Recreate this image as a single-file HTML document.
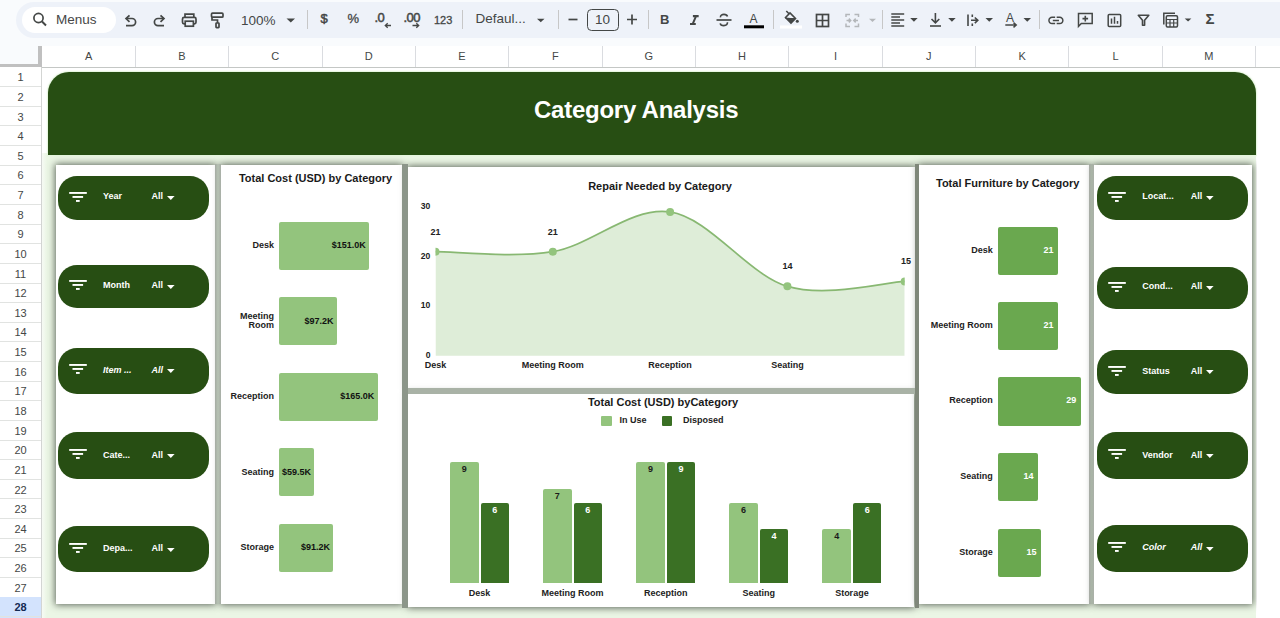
<!DOCTYPE html>
<html><head><meta charset="utf-8">
<style>
*{box-sizing:border-box;margin:0;padding:0}
html,body{width:1280px;height:618px;overflow:hidden;background:#f9fbfd;font-family:"Liberation Sans",sans-serif;position:relative}
.a{position:absolute}
#tb{left:16px;top:2px;width:1300px;height:36px;border-radius:18px;background:#eef2f9}
#search{left:22px;top:7px;width:94px;height:26px;border-radius:13px;background:#fff}
.tt{position:absolute;color:#444746;font-size:13px;line-height:16px;white-space:nowrap}
.sep{position:absolute;top:10px;width:1px;height:19px;background:#c7c7c7}
#colh{left:0;top:46px;width:1280px;height:22px;background:#fff;border-bottom:1px solid #c4c7c5}
.cl{position:absolute;top:0;height:21px;line-height:21px;font-size:11px;color:#444746;text-align:center}
.cs{position:absolute;top:0;width:1px;height:21px;background:#dadce0}
#corner{left:0;top:46px;width:42px;height:22px;background:#f9fbfd;border-right:4px solid #c0c0c0;border-bottom:4px solid #c0c0c0}
#rowh{left:0;top:67px;width:42px;height:551px;background:#fff;border-right:1px solid #d3d5d3}
.rl{position:absolute;left:0;width:41px;text-align:center;font-size:11px;color:#444746}
.rs{position:absolute;left:0;width:41px;height:1px;background:#e1e3e1}
#grid{left:42px;top:68px;width:1238px;height:550px;background:#fff}
#dash{left:42px;top:153px;width:1214px;height:465px;background:linear-gradient(90deg,#f6faf4 0,#ebf6e5 5px)}
#hdr{left:47.5px;top:71.5px;width:1208.5px;height:83.5px;background:#274e13;border-radius:21px 21px 0 0;box-shadow:0 0 1.5px 1px #e3f5dc}
#hdr span{position:absolute;left:486.5px;width:203px;top:23px;text-align:center;color:#fff;font-weight:bold;font-size:24px;line-height:30px;letter-spacing:-.25px;white-space:nowrap}
.card{position:absolute;background:#fff;box-shadow:0 0 7px 1px rgba(70,80,68,.85)}
.pill{position:absolute;background:#274e13;border-radius:19px;color:#fff;font-weight:bold;font-size:9.5px}
.pt{position:absolute;color:#fff;font-weight:bold;font-size:9px;line-height:12px;white-space:nowrap}
.ct{position:absolute;color:#1a1a1a;font-weight:bold;font-size:11px;line-height:13px;white-space:nowrap}
.lb{position:absolute;color:#222;font-weight:bold;font-size:9px;line-height:11px;white-space:nowrap}
.bar{position:absolute;border-radius:2px}
</style></head><body>
<div id="tb" class="a"></div>
<div id="search" class="a"></div>
<svg class="a" style="left:0;top:0" width="1280" height="40" viewBox="0 0 1280 40" fill="none" stroke="#444746" stroke-width="1.7">
<!-- search -->
<circle cx="38.5" cy="18" r="4.6"/><path d="M42 21.5 L46 25.5" stroke-width="1.9"/>
<!-- undo -->
<path d="M127 18.5 H132 a3.6 3.6 0 0 1 0 7.2 H126"/><path d="M129.5 15.3 L126 18.6 L129.5 21.9"/>
<!-- redo -->
<path d="M163.5 18.5 H158 a3.6 3.6 0 0 0 0 7.2 H164"/><path d="M160.5 15.3 L164 18.6 L160.5 21.9"/>
<!-- print -->
<path d="M185 17.3 V14.2 H193.8 V17.3"/><rect x="182.5" y="17.3" width="13.5" height="6.5" rx="1.6"/><rect x="185.2" y="21.2" width="8.2" height="5" fill="#eef2f9"/>
<!-- paint format -->
<rect x="211.5" y="13.2" width="11.5" height="4" rx="1"/><path d="M212 17.2 V20 H217.5 V23"/><rect x="216" y="23" width="3" height="4.6" rx=".6"/>
<!-- zoom arrow -->
<path d="M286.5 18.5 H295 L290.75 22.5Z" fill="#444746" stroke="none"/>
<!-- decrease decimal arrow -->
<path d="M391 25.5 H385.5 M387.7 23.3 L385.3 25.5 L387.7 27.7" stroke-width="1.3"/>
<path d="M412.5 25.5 H418.5 M416.3 23.3 L418.7 25.5 L416.3 27.7" stroke-width="1.3"/>
<!-- font arrow -->
<path d="M537 18.8 H544.5 L540.75 22.3Z" fill="#444746" stroke="none"/>
<!-- minus plus -->
<path d="M568.5 19.5 H577.5"/><path d="M627 19.5 H637 M632 14.5 V24.5"/>
<rect x="587.5" y="9.5" width="31" height="21" rx="4" stroke-width="1"/>
<path transform="translate(685.7 12.1) scale(0.72)" fill="#444746" stroke="none" d="M10 4v3h2.21l-3.42 8H6v3h8v-3h-2.21l3.42-8H18V4z"/>
<!-- strikethrough -->
<path d="M716.5 20 H731.5"/><path d="M727.5 16.5 C727 14.8 725.5 14.4 724 14.4 C722 14.4 720.2 15.3 720.5 17.3" stroke-width="1.6"/><path d="M727.5 22.3 C727.5 24.8 725.6 25.6 723.8 25.6 C721.8 25.6 720.4 24.8 720.2 23.3" stroke-width="1.6"/>
<!-- text color underline -->
<rect x="744" y="25.3" width="20" height="3" fill="#000" stroke="none"/>
<!-- paint bucket -->
<path d="M786.3 11 L789 13.7 M785.5 17.5 L790 13 L795.5 18.5 L791 23 Z" stroke-width="1.6"/><path d="M785.5 18.5 H795" stroke-width="1"/><path d="M785.5 17.5 L791 23 L795.5 18.5 Z" fill="#444746" stroke="none"/><circle cx="797.3" cy="21.3" r="1.5" fill="#444746" stroke="none"/>
<rect x="780" y="25.5" width="22" height="3" fill="#fff" stroke="none"/>
<!-- borders -->
<rect x="816.5" y="14.5" width="12" height="12"/><path d="M822.5 14.5 V26.5 M816.5 20.5 H828.5"/>
<!-- merge (disabled) -->
<g stroke="#b4b7ba" stroke-width="1.5"><path d="M846 17 V14.5 H850 M854.5 14.5 H858.5 V17 M846 23.5 V26.5 H850 M854.5 26.5 H858.5 V23.5"/><path d="M846.5 20.5 H850.5 M848.8 18.6 L850.7 20.5 L848.8 22.4 M858 20.5 H854 M855.7 18.6 L853.8 20.5 L855.7 22.4"/></g>
<path d="M869 18.8 H876 L872.5 22Z" fill="#b4b7ba" stroke="none"/>
<!-- align left -->
<path d="M891.3 14 H904.2 M891.3 17 H900 M891.3 20 H904.2 M891.3 23 H900 M891.3 26 H904.2" stroke-width="1.4"/>
<path d="M910.2 18 H917.7 L913.95 21.8Z" fill="#444746" stroke="none"/>
<!-- valign bottom -->
<path d="M935.4 13 V22.5 M931.5 19 L935.4 22.8 L939.3 19" stroke-width="1.6"/><path d="M930 26 H941" stroke-width="1.6"/>
<path d="M948.2 18 H955.7 L951.95 21.8Z" fill="#444746" stroke="none"/>
<!-- wrap -->
<path d="M968 14.5 V26 M972.3 14.5 V17 M972.3 23.5 V26 M971 20.3 H977.5 M974.8 17.5 L977.8 20.3 L974.8 23.1" stroke-width="1.6"/>
<path d="M985.5 18 H993 L989.25 21.8Z" fill="#444746" stroke="none"/>
<!-- rotate -->
<path d="M1005.3 25 H1016 M1013.5 22.6 L1016.2 25 L1013.5 27.4" stroke-width="1.5"/>
<path d="M1023.5 18 H1031 L1027.25 21.8Z" fill="#444746" stroke="none"/>
<!-- link -->
<path transform="translate(1046.66 11.21) scale(0.77)" fill="#444746" stroke="none" d="M3.9 12c0-1.71 1.39-3.1 3.1-3.1h4V7H7c-2.76 0-5 2.240-5 5s2.24 5 5 5h4v-1.9H7c-1.71 0-3.1-1.39-3.1-3.1zM8 13h8v-2H8v2zm9-6h-4v1.9h4c1.71 0 3.1 1.39 3.1 3.1s-1.390 3.1-3.1 3.1h-4V17h4c2.76 0 5-2.24 5-5s-2.24-5-5-5z"/>
<!-- comment -->
<path d="M1078.5 26.5 V13.6 H1092.2 V23.6 H1081.3 Z" stroke-width="1.5"/><path d="M1085.3 15.8 V21.4 M1082.5 18.6 H1088.1" stroke-width="1.6"/>
<!-- chart -->
<rect x="1108.2" y="14.4" width="12.5" height="12" rx="1" stroke-width="1.5"/><path d="M1111.5 18.5 V23.8 M1114.5 16.8 V23.8 M1117.5 21 V23.8" stroke-width="1.5"/>
<!-- filter -->
<path d="M1138.3 15.3 H1148.8 L1144.6 20.3 V25.3 H1142.5 V20.3 Z" stroke-width="1.6" stroke-linejoin="round"/>
<!-- table/functions -->
<path d="M1163.8 24.5 V13.2 H1175" stroke-width="1.5"/><rect x="1166.3" y="15.7" width="11.2" height="11.2" rx="1.2" stroke-width="1.5"/><path d="M1166.3 19.5 H1177.5 M1166.3 23 H1177.5 M1170 19.5 V26.9 M1173.7 19.5 V26.9" stroke-width="1.2"/>
<path d="M1184.7 18.5 H1191.4 L1188.05 21.5Z" fill="#444746" stroke="none"/>
</svg>
<div class="tt" style="left:56px;top:12px;font-size:13.5px;color:#474747">Menus</div>
<div class="tt" style="left:241px;top:12.5px;font-size:13.5px">100%</div>
<div class="sep" style="left:307px"></div>
<div class="tt" style="left:320.5px;top:11px;font-size:13px;-webkit-text-stroke:.5px #444746">$</div>
<div class="tt" style="left:347.5px;top:11px;font-size:13px;-webkit-text-stroke:.3px #444746">%</div>
<div class="tt" style="left:374.5px;top:10px;font-size:13px;-webkit-text-stroke:.5px #444746;letter-spacing:-.5px">.0</div>
<div class="tt" style="left:403.5px;top:10px;font-size:13px;-webkit-text-stroke:.5px #444746;letter-spacing:-.5px">.00</div>
<div class="tt" style="left:434px;top:12px;font-size:11px;-webkit-text-stroke:.3px #444746">123</div>
<div class="sep" style="left:461.5px"></div>
<div class="tt" style="left:475.5px;top:11px;font-size:13.5px">Defaul...</div>
<div class="sep" style="left:558px"></div>
<div class="tt" style="left:595px;top:12px;font-size:13.5px">10</div>
<div class="sep" style="left:647.5px"></div>
<div class="tt" style="left:660px;top:12px;font-size:13px;font-weight:bold">B</div>
<div class="tt" style="left:749.5px;top:11px;font-size:12px">A</div>
<div class="sep" style="left:773px"></div>
<div class="sep" style="left:881.7px"></div>
<div class="tt" style="left:1006px;top:10px;font-size:12px">A</div>
<div class="sep" style="left:1038.5px"></div>
<div class="tt" style="left:1205.5px;top:11px;font-size:15px;font-weight:bold">&Sigma;</div>
<div id="colh" class="a"><div class="cl" style="left:42.0px;width:93.3px">A</div><div class="cs" style="left:134.8px"></div><div class="cl" style="left:135.3px;width:93.3px">B</div><div class="cs" style="left:228.2px"></div><div class="cl" style="left:228.7px;width:93.3px">C</div><div class="cs" style="left:321.5px"></div><div class="cl" style="left:322.0px;width:93.3px">D</div><div class="cs" style="left:414.9px"></div><div class="cl" style="left:415.4px;width:93.3px">E</div><div class="cs" style="left:508.2px"></div><div class="cl" style="left:508.7px;width:93.3px">F</div><div class="cs" style="left:601.6px"></div><div class="cl" style="left:602.1px;width:93.3px">G</div><div class="cs" style="left:694.9px"></div><div class="cl" style="left:695.4px;width:93.3px">H</div><div class="cs" style="left:788.3px"></div><div class="cl" style="left:788.8px;width:93.3px">I</div><div class="cs" style="left:881.6px"></div><div class="cl" style="left:882.1px;width:93.3px">J</div><div class="cs" style="left:975.0px"></div><div class="cl" style="left:975.5px;width:93.3px">K</div><div class="cs" style="left:1068.3px"></div><div class="cl" style="left:1068.8px;width:93.3px">L</div><div class="cs" style="left:1161.7px"></div><div class="cl" style="left:1162.2px;width:93.3px">M</div><div class="cs" style="left:1255.0px"></div></div>
<div id="corner" class="a"></div>
<div id="rowh" class="a"><div class="rl" style="top:1.2px;height:19.6px;line-height:19.6px">1</div><div class="rs" style="top:19.1px"></div><div class="rl" style="top:20.8px;height:19.6px;line-height:19.6px">2</div><div class="rs" style="top:38.8px"></div><div class="rl" style="top:40.5px;height:19.6px;line-height:19.6px">3</div><div class="rs" style="top:58.4px"></div><div class="rl" style="top:60.1px;height:19.6px;line-height:19.6px">4</div><div class="rs" style="top:78.0px"></div><div class="rl" style="top:79.7px;height:19.6px;line-height:19.6px">5</div><div class="rs" style="top:97.7px"></div><div class="rl" style="top:99.4px;height:19.6px;line-height:19.6px">6</div><div class="rs" style="top:117.3px"></div><div class="rl" style="top:119.0px;height:19.6px;line-height:19.6px">7</div><div class="rs" style="top:136.9px"></div><div class="rl" style="top:138.6px;height:19.6px;line-height:19.6px">8</div><div class="rs" style="top:156.6px"></div><div class="rl" style="top:158.3px;height:19.6px;line-height:19.6px">9</div><div class="rs" style="top:176.2px"></div><div class="rl" style="top:177.9px;height:19.6px;line-height:19.6px">10</div><div class="rs" style="top:195.8px"></div><div class="rl" style="top:197.5px;height:19.6px;line-height:19.6px">11</div><div class="rs" style="top:215.5px"></div><div class="rl" style="top:217.2px;height:19.6px;line-height:19.6px">12</div><div class="rs" style="top:235.1px"></div><div class="rl" style="top:236.8px;height:19.6px;line-height:19.6px">13</div><div class="rs" style="top:254.7px"></div><div class="rl" style="top:256.4px;height:19.6px;line-height:19.6px">14</div><div class="rs" style="top:274.4px"></div><div class="rl" style="top:276.1px;height:19.6px;line-height:19.6px">15</div><div class="rs" style="top:294.0px"></div><div class="rl" style="top:295.7px;height:19.6px;line-height:19.6px">16</div><div class="rs" style="top:313.6px"></div><div class="rl" style="top:315.3px;height:19.6px;line-height:19.6px">17</div><div class="rs" style="top:333.2px"></div><div class="rl" style="top:334.9px;height:19.6px;line-height:19.6px">18</div><div class="rs" style="top:352.9px"></div><div class="rl" style="top:354.6px;height:19.6px;line-height:19.6px">19</div><div class="rs" style="top:372.5px"></div><div class="rl" style="top:374.2px;height:19.6px;line-height:19.6px">20</div><div class="rs" style="top:392.1px"></div><div class="rl" style="top:393.8px;height:19.6px;line-height:19.6px">21</div><div class="rs" style="top:411.8px"></div><div class="rl" style="top:413.5px;height:19.6px;line-height:19.6px">22</div><div class="rs" style="top:431.4px"></div><div class="rl" style="top:433.1px;height:19.6px;line-height:19.6px">23</div><div class="rs" style="top:451.0px"></div><div class="rl" style="top:452.7px;height:19.6px;line-height:19.6px">24</div><div class="rs" style="top:470.7px"></div><div class="rl" style="top:472.4px;height:19.6px;line-height:19.6px">25</div><div class="rs" style="top:490.3px"></div><div class="rl" style="top:492.0px;height:19.6px;line-height:19.6px">26</div><div class="rs" style="top:509.9px"></div><div class="rl" style="top:511.6px;height:19.6px;line-height:19.6px">27</div><div class="rs" style="top:529.6px"></div><div class="a" style="left:0;top:530.1px;width:41px;height:21.6px;background:#d3e3fd"></div><div class="rl" style="top:531.3px;height:19.6px;line-height:19.6px;color:#142a52;font-weight:bold">28</div><div class="rs" style="top:549.2px"></div></div>
<div id="grid" class="a"></div>
<div id="dash" class="a"></div>
<div id="hdr" class="a"><span>Category Analysis</span></div>
<div class="card" style="left:56px;top:164.5px;width:158.5px;height:439.3px"></div>
<div class="card" style="left:221px;top:164.5px;width:181px;height:439.3px"></div>
<div class="card" style="left:408px;top:167px;width:506.6px;height:221px"></div>
<div class="card" style="left:408px;top:393.6px;width:506px;height:213.6px"></div>
<div class="card" style="left:919.2px;top:164.5px;width:169.6px;height:439.3px"></div>
<div class="card" style="left:1094px;top:164.5px;width:158px;height:439.3px"></div>
<div class="a" style="left:214.5px;top:164px;width:6.5px;height:440px;background:linear-gradient(90deg,#a4aaa2,#b6c2b3 50%,#a8aea6)"></div>
<div class="a" style="left:401.8px;top:164px;width:6.4px;height:443.5px;background:#8c968a"></div>
<div class="a" style="left:914.6px;top:164px;width:4.6px;height:443.5px;background:#7f877a"></div>
<div class="a" style="left:1088.6px;top:164px;width:5.6px;height:440px;background:linear-gradient(90deg,#a7aaa5,#a9b4a6 50%,#aab0a8)"></div>
<div class="a" style="left:408px;top:387.8px;width:506.6px;height:5.8px;background:#a9b2a6"></div>
<div class="a" style="left:1256.5px;top:150px;width:24px;height:468px;background:#fff"></div>
<div class="pill" style="left:58.2px;top:176.4px;width:151.2px;height:43.4px"></div><svg class="a" style="left:69.3px;top:191.8px" width="20" height="12" viewBox="0 0 20 12" fill="#fff"><rect x="0.2" y="0" width="17.6" height="1.9"/><rect x="3.5" y="4" width="10.6" height="1.9"/><rect x="7" y="8" width="3.7" height="1.9"/></svg><div class="pt" style="left:103.1px;top:190.3px;">Year</div><div class="pt" style="left:151.6px;top:190.3px;">All</div><svg class="a" style="left:166.6px;top:195.9px" width="8" height="5" viewBox="0 0 8 5"><path d="M0 0H7.6L3.8 4Z" fill="#fff"/></svg>
<div class="pill" style="left:58.2px;top:265.0px;width:151.2px;height:42.5px"></div><svg class="a" style="left:69.3px;top:280.2px" width="20" height="12" viewBox="0 0 20 12" fill="#fff"><rect x="0.2" y="0" width="17.6" height="1.9"/><rect x="3.5" y="4" width="10.6" height="1.9"/><rect x="7" y="8" width="3.7" height="1.9"/></svg><div class="pt" style="left:103.1px;top:279.3px;">Month</div><div class="pt" style="left:151.6px;top:279.3px;">All</div><svg class="a" style="left:166.6px;top:284.9px" width="8" height="5" viewBox="0 0 8 5"><path d="M0 0H7.6L3.8 4Z" fill="#fff"/></svg>
<div class="pill" style="left:58.2px;top:348.2px;width:151.2px;height:45.6px"></div><svg class="a" style="left:69.3px;top:364.2px" width="20" height="12" viewBox="0 0 20 12" fill="#fff"><rect x="0.2" y="0" width="17.6" height="1.9"/><rect x="3.5" y="4" width="10.6" height="1.9"/><rect x="7" y="8" width="3.7" height="1.9"/></svg><div class="pt" style="left:103.1px;top:363.5px;font-style:italic;">Item ...</div><div class="pt" style="left:151.6px;top:363.5px;font-style:italic;">All</div><svg class="a" style="left:166.6px;top:369.1px" width="8" height="5" viewBox="0 0 8 5"><path d="M0 0H7.6L3.8 4Z" fill="#fff"/></svg>
<div class="pill" style="left:58.2px;top:432.3px;width:151.2px;height:47.1px"></div><svg class="a" style="left:69.3px;top:449.2px" width="20" height="12" viewBox="0 0 20 12" fill="#fff"><rect x="0.2" y="0" width="17.6" height="1.9"/><rect x="3.5" y="4" width="10.6" height="1.9"/><rect x="7" y="8" width="3.7" height="1.9"/></svg><div class="pt" style="left:103.1px;top:448.5px;">Cate...</div><div class="pt" style="left:151.6px;top:448.5px;">All</div><svg class="a" style="left:166.6px;top:454.1px" width="8" height="5" viewBox="0 0 8 5"><path d="M0 0H7.6L3.8 4Z" fill="#fff"/></svg>
<div class="pill" style="left:58.2px;top:526.2px;width:151.2px;height:46.2px"></div><svg class="a" style="left:69.3px;top:543.2px" width="20" height="12" viewBox="0 0 20 12" fill="#fff"><rect x="0.2" y="0" width="17.6" height="1.9"/><rect x="3.5" y="4" width="10.6" height="1.9"/><rect x="7" y="8" width="3.7" height="1.9"/></svg><div class="pt" style="left:103.1px;top:541.9px;">Depa...</div><div class="pt" style="left:151.6px;top:541.9px;">All</div><svg class="a" style="left:166.6px;top:547.5px" width="8" height="5" viewBox="0 0 8 5"><path d="M0 0H7.6L3.8 4Z" fill="#fff"/></svg>
<div class="pill" style="left:1097.3px;top:176.4px;width:151.2px;height:43.4px"></div><svg class="a" style="left:1108.4px;top:191.8px" width="20" height="12" viewBox="0 0 20 12" fill="#fff"><rect x="0.2" y="0" width="17.6" height="1.9"/><rect x="3.5" y="4" width="10.6" height="1.9"/><rect x="7" y="8" width="3.7" height="1.9"/></svg><div class="pt" style="left:1142.2px;top:190.3px;">Locat...</div><div class="pt" style="left:1190.7px;top:190.3px;">All</div><svg class="a" style="left:1205.7px;top:195.9px" width="8" height="5" viewBox="0 0 8 5"><path d="M0 0H7.6L3.8 4Z" fill="#fff"/></svg>
<div class="pill" style="left:1097.3px;top:266.7px;width:151.2px;height:42.7px"></div><svg class="a" style="left:1108.4px;top:281.6px" width="20" height="12" viewBox="0 0 20 12" fill="#fff"><rect x="0.2" y="0" width="17.6" height="1.9"/><rect x="3.5" y="4" width="10.6" height="1.9"/><rect x="7" y="8" width="3.7" height="1.9"/></svg><div class="pt" style="left:1142.2px;top:280.2px;">Cond...</div><div class="pt" style="left:1190.7px;top:280.2px;">All</div><svg class="a" style="left:1205.7px;top:285.8px" width="8" height="5" viewBox="0 0 8 5"><path d="M0 0H7.6L3.8 4Z" fill="#fff"/></svg>
<div class="pill" style="left:1097.3px;top:350.0px;width:151.2px;height:44.4px"></div><svg class="a" style="left:1108.4px;top:366.2px" width="20" height="12" viewBox="0 0 20 12" fill="#fff"><rect x="0.2" y="0" width="17.6" height="1.9"/><rect x="3.5" y="4" width="10.6" height="1.9"/><rect x="7" y="8" width="3.7" height="1.9"/></svg><div class="pt" style="left:1142.2px;top:364.5px;">Status</div><div class="pt" style="left:1190.7px;top:364.5px;">All</div><svg class="a" style="left:1205.7px;top:370.1px" width="8" height="5" viewBox="0 0 8 5"><path d="M0 0H7.6L3.8 4Z" fill="#fff"/></svg>
<div class="pill" style="left:1097.3px;top:432.3px;width:151.2px;height:47.1px"></div><svg class="a" style="left:1108.4px;top:449.2px" width="20" height="12" viewBox="0 0 20 12" fill="#fff"><rect x="0.2" y="0" width="17.6" height="1.9"/><rect x="3.5" y="4" width="10.6" height="1.9"/><rect x="7" y="8" width="3.7" height="1.9"/></svg><div class="pt" style="left:1142.2px;top:448.5px;">Vendor</div><div class="pt" style="left:1190.7px;top:448.5px;">All</div><svg class="a" style="left:1205.7px;top:454.1px" width="8" height="5" viewBox="0 0 8 5"><path d="M0 0H7.6L3.8 4Z" fill="#fff"/></svg>
<div class="pill" style="left:1097.3px;top:524.9px;width:151.2px;height:46.9px"></div><svg class="a" style="left:1108.4px;top:542.2px" width="20" height="12" viewBox="0 0 20 12" fill="#fff"><rect x="0.2" y="0" width="17.6" height="1.9"/><rect x="3.5" y="4" width="10.6" height="1.9"/><rect x="7" y="8" width="3.7" height="1.9"/></svg><div class="pt" style="left:1142.2px;top:541.0px;font-style:italic;">Color</div><div class="pt" style="left:1190.7px;top:541.0px;font-style:italic;">All</div><svg class="a" style="left:1205.7px;top:546.6px" width="8" height="5" viewBox="0 0 8 5"><path d="M0 0H7.6L3.8 4Z" fill="#fff"/></svg>
<div class="ct" style="left:225px;top:172px;width:181px;text-align:center">Total Cost (USD) by Category</div>
<div class="bar" style="left:278.8px;top:221.6px;width:90.6px;height:48.2px;background:#93c47d"></div><div class="lb" style="right:1006.0px;top:240.0px">Desk</div><div class="lb" style="right:914.2px;top:240.0px;color:#111">$151.0K</div>
<div class="bar" style="left:278.8px;top:297.1px;width:58.3px;height:48.2px;background:#93c47d"></div><div class="lb" style="right:1006.0px;top:311.9px;text-align:right;line-height:9.6px">Meeting<br>Room</div><div class="lb" style="right:946.5px;top:315.5px;color:#111">$97.2K</div>
<div class="bar" style="left:278.8px;top:372.6px;width:99.0px;height:48.2px;background:#93c47d"></div><div class="lb" style="right:1006.0px;top:391.0px">Reception</div><div class="lb" style="right:905.8px;top:391.0px;color:#111">$165.0K</div>
<div class="bar" style="left:278.8px;top:448.1px;width:35.7px;height:48.2px;background:#93c47d"></div><div class="lb" style="right:1006.0px;top:466.5px">Seating</div><div class="lb" style="right:969.1px;top:466.5px;color:#111">$59.5K</div>
<div class="bar" style="left:278.8px;top:523.6px;width:54.7px;height:48.2px;background:#93c47d"></div><div class="lb" style="right:1006.0px;top:542.0px">Storage</div><div class="lb" style="right:950.1px;top:542.0px;color:#111">$91.2K</div>
<div class="ct" style="left:936px;top:177px">Total Furniture by Category</div>
<div class="bar" style="left:998px;top:226.7px;width:59.7px;height:48.2px;background:#6aa84f"></div><div class="lb" style="right:287.2px;top:244.7px">Desk</div><div class="lb" style="right:226.6px;top:244.7px;color:#fff">21</div>
<div class="bar" style="left:998px;top:302.3px;width:59.7px;height:48.2px;background:#6aa84f"></div><div class="lb" style="right:287.2px;top:320.3px">Meeting Room</div><div class="lb" style="right:226.6px;top:320.3px;color:#fff">21</div>
<div class="bar" style="left:998px;top:377.4px;width:82.5px;height:48.2px;background:#6aa84f"></div><div class="lb" style="right:287.2px;top:395.4px">Reception</div><div class="lb" style="right:203.8px;top:395.4px;color:#fff">29</div>
<div class="bar" style="left:998px;top:453.1px;width:39.8px;height:48.2px;background:#6aa84f"></div><div class="lb" style="right:287.2px;top:471.1px">Seating</div><div class="lb" style="right:246.5px;top:471.1px;color:#fff">14</div>
<div class="bar" style="left:998px;top:529.0px;width:42.7px;height:48.2px;background:#6aa84f"></div><div class="lb" style="right:287.2px;top:547.0px">Storage</div><div class="lb" style="right:243.6px;top:547.0px;color:#fff">15</div>
<div class="ct" style="left:406.5px;width:507px;top:180px;text-align:center">Repair Needed by Category</div>
<svg class="a" style="left:0;top:0" width="1280" height="618" viewBox="0 0 1280 618"><defs><clipPath id="pc"><rect x="435.50" y="190" width="469.20" height="170"/></clipPath></defs><g clip-path="url(#pc)"><path d="M435.50 251.64 C455.05 251.64 513.70 258.25 552.80 251.64 C591.90 245.03 631.00 206.17 670.10 211.96 C709.20 217.75 748.30 274.79 787.40 286.36 C826.50 297.93 885.15 282.23 904.70 281.40 L904.70 355.80 L435.50 355.80 Z" fill="#93c47d" fill-opacity="0.3"/><path d="M435.50 251.64 C455.05 251.64 513.70 258.25 552.80 251.64 C591.90 245.03 631.00 206.17 670.10 211.96 C709.20 217.75 748.30 274.79 787.40 286.36 C826.50 297.93 885.15 282.23 904.70 281.40" fill="none" stroke="#88b872" stroke-width="1.7"/><circle cx="435.50" cy="251.64" r="4" fill="#93c47d"/><circle cx="552.80" cy="251.64" r="4" fill="#93c47d"/><circle cx="670.10" cy="211.96" r="4" fill="#93c47d"/><circle cx="787.40" cy="286.36" r="4" fill="#93c47d"/><circle cx="904.70" cy="281.40" r="4" fill="#93c47d"/></g></svg>
<div class="lb" style="right:849.6px;top:200.8px;font-size:8.6px">30</div><div class="lb" style="right:849.6px;top:250.9px;font-size:8.6px">20</div><div class="lb" style="right:849.6px;top:300.3px;font-size:8.6px">10</div><div class="lb" style="right:849.6px;top:350.0px;font-size:8.6px">0</div><div class="lb" style="left:375.5px;width:120px;top:360.0px;text-align:center">Desk</div><div class="lb" style="left:492.8px;width:120px;top:360.0px;text-align:center">Meeting Room</div><div class="lb" style="left:610.1px;width:120px;top:360.0px;text-align:center">Reception</div><div class="lb" style="left:727.4px;width:120px;top:360.0px;text-align:center">Seating</div><div class="lb" style="left:415.5px;width:40px;top:226.6px;text-align:center;font-size:9px">21</div><div class="lb" style="left:532.8px;width:40px;top:226.6px;text-align:center;font-size:9px">21</div><div class="lb" style="left:767.4px;width:40px;top:261.4px;text-align:center;font-size:9px">14</div><div class="lb" style="left:885.9px;width:40px;top:256.4px;text-align:center;font-size:9px">15</div>
<div class="ct" style="left:410px;width:506px;top:396px;text-align:center">Total Cost (USD) byCategory</div>
<div class="a" style="left:601.1px;top:415.9px;width:10.6px;height:9.8px;background:#93c47d;border-radius:1px"></div><div class="lb" style="left:619.4px;top:415px">In Use</div><div class="a" style="left:661.6px;top:415.9px;width:10.8px;height:9.8px;background:#3a7024;border-radius:1px"></div><div class="lb" style="left:683px;top:415px">Disposed</div>
<div class="bar" style="left:450.0px;top:462.1px;width:28.5px;height:121.0px;background:#93c47d;border-radius:2px 2px 0 0"></div><div class="lb" style="left:450.0px;width:28.5px;text-align:center;top:464.1px;color:#1b1b1b">9</div><div class="bar" style="left:480.5px;top:502.5px;width:28.5px;height:80.6px;background:#3a7024;border-radius:2px 2px 0 0"></div><div class="lb" style="left:480.5px;width:28.5px;text-align:center;top:504.5px;color:#fff">6</div><div class="lb" style="left:419.5px;width:120px;text-align:center;top:588px">Desk</div>
<div class="bar" style="left:543.1px;top:489.0px;width:28.5px;height:94.1px;background:#93c47d;border-radius:2px 2px 0 0"></div><div class="lb" style="left:543.1px;width:28.5px;text-align:center;top:491.0px;color:#1b1b1b">7</div><div class="bar" style="left:573.6px;top:502.5px;width:28.5px;height:80.6px;background:#3a7024;border-radius:2px 2px 0 0"></div><div class="lb" style="left:573.6px;width:28.5px;text-align:center;top:504.5px;color:#fff">6</div><div class="lb" style="left:512.6px;width:120px;text-align:center;top:588px">Meeting Room</div>
<div class="bar" style="left:636.2px;top:462.1px;width:28.5px;height:121.0px;background:#93c47d;border-radius:2px 2px 0 0"></div><div class="lb" style="left:636.2px;width:28.5px;text-align:center;top:464.1px;color:#1b1b1b">9</div><div class="bar" style="left:666.7px;top:462.1px;width:28.5px;height:121.0px;background:#3a7024;border-radius:2px 2px 0 0"></div><div class="lb" style="left:666.7px;width:28.5px;text-align:center;top:464.1px;color:#fff">9</div><div class="lb" style="left:605.7px;width:120px;text-align:center;top:588px">Reception</div>
<div class="bar" style="left:729.3px;top:502.5px;width:28.5px;height:80.6px;background:#93c47d;border-radius:2px 2px 0 0"></div><div class="lb" style="left:729.3px;width:28.5px;text-align:center;top:504.5px;color:#1b1b1b">6</div><div class="bar" style="left:759.8px;top:529.3px;width:28.5px;height:53.8px;background:#3a7024;border-radius:2px 2px 0 0"></div><div class="lb" style="left:759.8px;width:28.5px;text-align:center;top:531.3px;color:#fff">4</div><div class="lb" style="left:698.8px;width:120px;text-align:center;top:588px">Seating</div>
<div class="bar" style="left:822.4px;top:529.3px;width:28.5px;height:53.8px;background:#93c47d;border-radius:2px 2px 0 0"></div><div class="lb" style="left:822.4px;width:28.5px;text-align:center;top:531.3px;color:#1b1b1b">4</div><div class="bar" style="left:852.9px;top:502.5px;width:28.5px;height:80.6px;background:#3a7024;border-radius:2px 2px 0 0"></div><div class="lb" style="left:852.9px;width:28.5px;text-align:center;top:504.5px;color:#fff">6</div><div class="lb" style="left:791.9px;width:120px;text-align:center;top:588px">Storage</div>
</body></html>
